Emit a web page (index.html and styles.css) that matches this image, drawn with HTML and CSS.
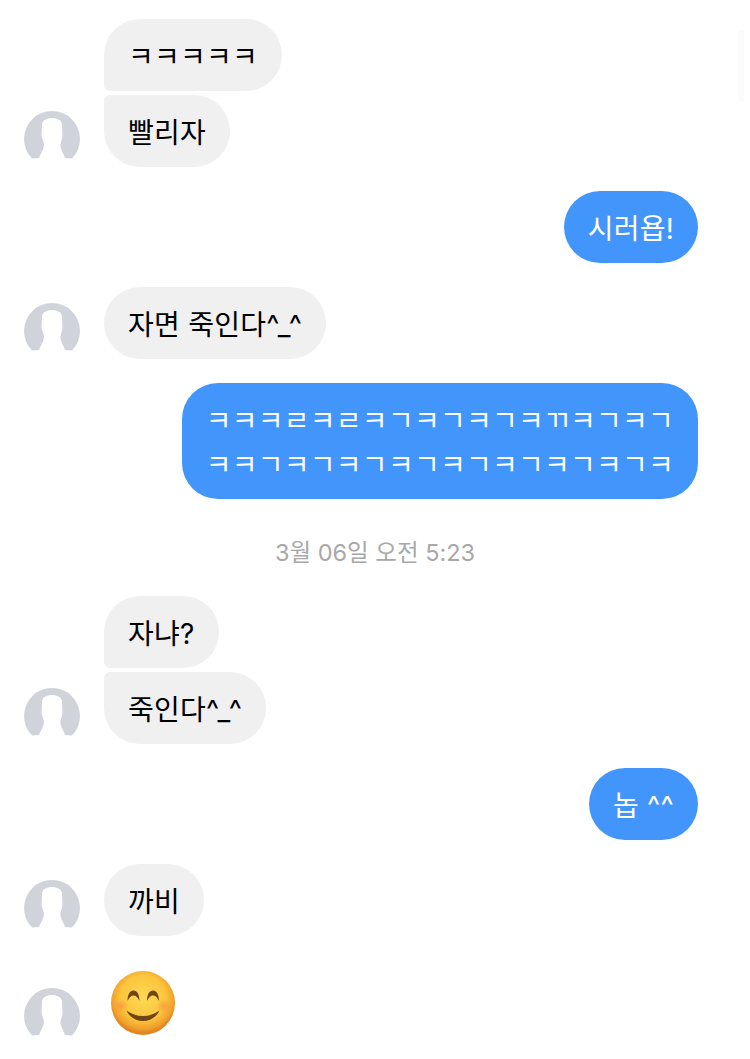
FILE: index.html
```html
<!DOCTYPE html>
<html>
	<head>
		<meta charset="utf-8" />
		<title>메시지</title>
		<link rel="stylesheet" href="styles.css">
	</head>
	<body>
		<svg class="defs" width="0" height="0">
			<symbol id="avatar" viewBox="0 0 56 56">
				<path fill="#d0d3da" d="M8 47.600A28 28 0 1 1 48 47.600L41 47C39 41 36 38 36.500 33.500 37 30 38.500 28 38.500 25L38 14C38 9 33 7 28 7 23 7 18 9 18 14L17.500 24C17.500 27 19.500 30 20 33.500 20 38 17 42 15 47Z"/>
			</symbol>
		</svg>

		<div class="chat">
			<div class="group">
				<svg class="avatar"><use href="#avatar"/></svg>
				<div class="stack">
					<div class="bubble in first">ㅋㅋㅋㅋㅋ</div>
					<div class="bubble in last">빨리자</div>
				</div>
			</div>

			<div class="group mine">
				<div class="bubble out">시러욥!</div>
			</div>

			<div class="group">
				<svg class="avatar"><use href="#avatar"/></svg>
				<div class="bubble in">자면 죽인다^_^</div>
			</div>

			<div class="group mine">
				<div class="bubble out jamo">ㅋㅋㅋㄹㅋㄹㅋㄱㅋㄱㅋㄱㅋㄲㅋㄱㅋㄱ<br>ㅋㅋㄱㅋㄱㅋㄱㅋㄱㅋㄱㅋㄱㅋㄱㅋㄱㅋ</div>
			</div>

			<div class="time">3월 06일 오전 5:23</div>

			<div class="group">
				<svg class="avatar"><use href="#avatar"/></svg>
				<div class="stack">
					<div class="bubble in first">자냐?</div>
					<div class="bubble in last">죽인다^_^</div>
				</div>
			</div>

			<div class="group mine">
				<div class="bubble out">놉 ^^</div>
			</div>

			<div class="group">
				<svg class="avatar"><use href="#avatar"/></svg>
				<div class="bubble in">까비</div>
			</div>

			<div class="group emoji-row">
				<svg class="avatar"><use href="#avatar"/></svg>
				<!-- 웃는 얼굴 이모지 -->
				<svg class="emoji" viewBox="0 0 66 66">
					<defs>
						<radialGradient id="face" cx="50%" cy="42%" r="54%">
							<stop offset="0" stop-color="#fdd955"/>
							<stop offset="0.65" stop-color="#fbc53c"/>
							<stop offset="0.9" stop-color="#f0a02c"/>
							<stop offset="1" stop-color="#e28622"/>
						</radialGradient>
						<radialGradient id="blush">
							<stop offset="0" stop-color="#f68a45" stop-opacity="0.6"/>
							<stop offset="1" stop-color="#f68a45" stop-opacity="0"/>
						</radialGradient>
					</defs>
					<circle cx="33" cy="33" r="32" fill="url(#face)"/>
					<ellipse cx="11" cy="36" rx="8" ry="7" fill="url(#blush)"/>
					<ellipse cx="54" cy="36" rx="8" ry="7" fill="url(#blush)"/>
					<path fill="#6e4514" d="M17.500 31C17.500 24.500 20 20.500 23.500 20.500S29.500 24.500 29.500 31C28 27.500 26 25.500 23.500 25.500S19 27.500 17.500 31Z"/>
					<path fill="#6e4514" d="M37 31C37 24.500 39.500 20.500 43 20.500S49 24.500 49 31C47.500 27.500 45.500 25.500 43 25.500S38.500 27.500 37 31Z"/>
					<path fill="#6e4514" d="M16.500 40.500C21 44 27 46 33 46S45 44 49.500 40.500C46.500 47 40.500 51 33 51S19.500 47 16.500 40.500Z"/>
				</svg>
			</div>
		</div>

		<div class="scroll-thumb"></div>
	</body>
</html>
```

FILE: styles.css
```css
body{
	margin: 0;
	height: 1059px;
	overflow: hidden;
	background-color: #ffffff;
	font-family: "Inter", "Noto Sans CJK KR", sans-serif;
}
.defs{
	position: absolute;
}
.chat{
	display: flex;
	flex-direction: column;
	gap: 24px;
	padding: 19px 52px 0 24px;
}
.group{
	display: flex;
	align-items: flex-end;
	gap: 24px;
}
.mine{
	justify-content: flex-end;
}
.stack{
	display: flex;
	flex-direction: column;
	align-items: flex-start;
	gap: 4px;
}
.avatar{
	width: 56px;
	height: 56px;
	flex: none;
}
.bubble{
	padding: 16px 24px 12px;
	border-radius: 36px;
	font-size: 28px;
	line-height: 44px;
	letter-spacing: 0.25px;
	white-space: nowrap;
}
.in{
	background-color: #f0f0f0;
	color: #000000;
}
.out{
	background-color: #4295fb;
	color: #ffffff;
}
.first{
	border-bottom-left-radius: 6px;
}
.last{
	border-top-left-radius: 6px;
}
/* 시간은 화면 전체 기준으로 가운데 */
.time{
	margin: 12px -52px 1px -24px;
	text-align: center;
	font-size: 23.5px;
	line-height: 36px;
	color: #a8a8a8;
}
.emoji-row{
	margin-top: 10px;
	gap: 30px;
}
.emoji{
	width: 66px;
	height: 66px;
	margin-bottom: 8px;
	flex: none;
}
.scroll-thumb{
	position: absolute;
	left: 738px;
	top: 30px;
	width: 6px;
	height: 72px;
	border-radius: 3px;
	background-color: #fbfbfb;
}
```
